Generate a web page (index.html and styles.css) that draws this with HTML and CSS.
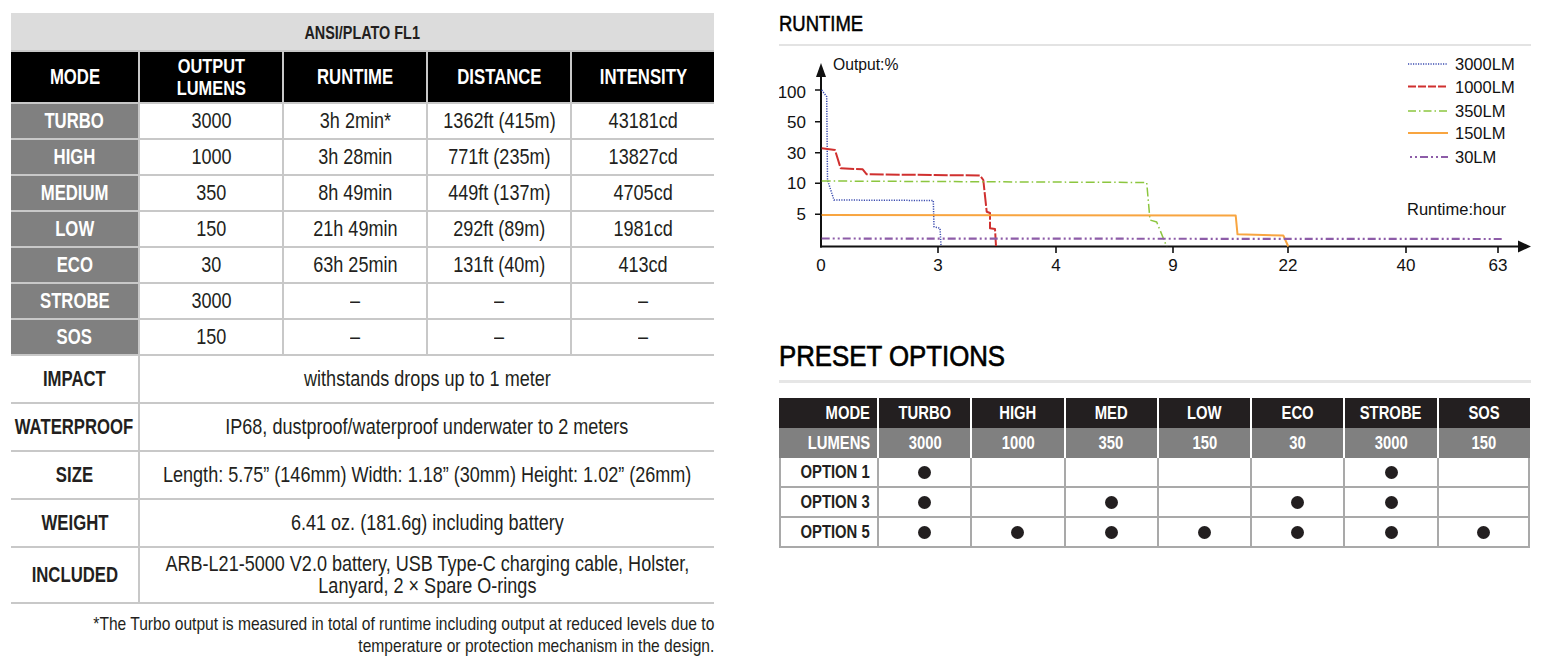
FILE: index.html
```html
<!DOCTYPE html>
<html lang="en">
<head>
<meta charset="utf-8">
<title>Specs</title>
<link rel="stylesheet" href="styles.css">
</head>
<body>
<div class="page">
  <section class="specs">
    <div class="spec-grid">
      <div class="cell ansi"><span class="t">ANSI/PLATO FL1</span></div>

      <div class="cell head"><span class="t">MODE</span></div>
      <div class="cell head two"><span class="t">OUTPUT<br>LUMENS</span></div>
      <div class="cell head"><span class="t">RUNTIME</span></div>
      <div class="cell head"><span class="t">DISTANCE</span></div>
      <div class="cell head"><span class="t">INTENSITY</span></div>

      <div class="cell mode"><span class="t">TURBO</span></div>
      <div class="cell val"><span class="t">3000</span></div>
      <div class="cell val"><span class="t">3h 2min*</span></div>
      <div class="cell val"><span class="t">1362ft (415m)</span></div>
      <div class="cell val"><span class="t">43181cd</span></div>

      <div class="cell mode"><span class="t">HIGH</span></div>
      <div class="cell val"><span class="t">1000</span></div>
      <div class="cell val"><span class="t">3h 28min</span></div>
      <div class="cell val"><span class="t">771ft (235m)</span></div>
      <div class="cell val"><span class="t">13827cd</span></div>

      <div class="cell mode"><span class="t">MEDIUM</span></div>
      <div class="cell val"><span class="t">350</span></div>
      <div class="cell val"><span class="t">8h 49min</span></div>
      <div class="cell val"><span class="t">449ft (137m)</span></div>
      <div class="cell val"><span class="t">4705cd</span></div>

      <div class="cell mode"><span class="t">LOW</span></div>
      <div class="cell val"><span class="t">150</span></div>
      <div class="cell val"><span class="t">21h 49min</span></div>
      <div class="cell val"><span class="t">292ft (89m)</span></div>
      <div class="cell val"><span class="t">1981cd</span></div>

      <div class="cell mode"><span class="t">ECO</span></div>
      <div class="cell val"><span class="t">30</span></div>
      <div class="cell val"><span class="t">63h 25min</span></div>
      <div class="cell val"><span class="t">131ft (40m)</span></div>
      <div class="cell val"><span class="t">413cd</span></div>

      <div class="cell mode"><span class="t">STROBE</span></div>
      <div class="cell val"><span class="t">3000</span></div>
      <div class="cell val"><span class="t">–</span></div>
      <div class="cell val"><span class="t">–</span></div>
      <div class="cell val"><span class="t">–</span></div>

      <div class="cell mode"><span class="t">SOS</span></div>
      <div class="cell val"><span class="t">150</span></div>
      <div class="cell val"><span class="t">–</span></div>
      <div class="cell val"><span class="t">–</span></div>
      <div class="cell val"><span class="t">–</span></div>

      <div class="cell label"><span class="t">IMPACT</span></div>
      <div class="cell val wide"><span class="t">withstands drops up to 1 meter</span></div>

      <div class="cell label"><span class="t">WATERPROOF</span></div>
      <div class="cell val wide"><span class="t">IP68, dustproof/waterproof underwater to 2 meters</span></div>

      <div class="cell label"><span class="t">SIZE</span></div>
      <div class="cell val wide"><span class="t">Length: 5.75” (146mm) Width: 1.18” (30mm) Height: 1.02” (26mm)</span></div>

      <div class="cell label"><span class="t">WEIGHT</span></div>
      <div class="cell val wide"><span class="t">6.41 oz. (181.6g) including battery</span></div>

      <div class="cell label"><span class="t">INCLUDED</span></div>
      <div class="cell val wide inc"><span class="t">ARB-L21-5000 V2.0 battery, USB Type-C charging cable, Holster,<br>Lanyard, 2 × Spare O-rings</span></div>
    </div>
    <p class="note"><span class="t">*The Turbo output is measured in total of runtime including output at reduced levels due to<br>temperature or protection mechanism in the design.</span></p>
  </section>

  <section class="side">
    <h2 class="title-sm"><span class="t">RUNTIME</span></h2>
    <div class="rule"></div>
    <svg class="chart" viewBox="779 46 752 234" width="752" height="234" xmlns="http://www.w3.org/2000/svg">
      <g fill="none" stroke="#111" stroke-width="2">
        <path d="M821 247.5 V74"/>
        <path d="M820 246.5 H1520"/>
      </g>
      <g fill="none" stroke="#111" stroke-width="1.6">
        <path d="M815 90 H821 M815 121.7 H821 M815 152.7 H821 M815 183.3 H821 M815 214.3 H821"/>
        <path d="M938 246 V253 M1056 246 V253 M1173 246 V253 M1288 246 V253 M1406 246 V253 M1498 246 V253"/>
      </g>
      <path d="M821 63 L816 77 L826 77 Z" fill="#111"/>
      <path d="M1531 246.5 L1518 240.5 L1518 252.5 Z" fill="#111"/>

      <g class="ctext" fill="#111">
        <text class="c-out" x="833" y="70">Output:%</text>
        <g class="c-y">
          <text x="806" y="97.5" text-anchor="end">100</text>
          <text x="806" y="128.2" text-anchor="end">50</text>
          <text x="806" y="158.7" text-anchor="end">30</text>
          <text x="806" y="189.3" text-anchor="end">10</text>
          <text x="806" y="220.2" text-anchor="end">5</text>
        </g>
        <g class="c-x">
          <text x="821" y="271" text-anchor="middle">0</text>
          <text x="938" y="271" text-anchor="middle">3</text>
          <text x="1056" y="271" text-anchor="middle">4</text>
          <text x="1173" y="271" text-anchor="middle">9</text>
          <text x="1288" y="271" text-anchor="middle">22</text>
          <text x="1406" y="271" text-anchor="middle">40</text>
          <text x="1498" y="271" text-anchor="middle">63</text>
        </g>
        <text x="1407" y="214.5">Runtime:hour</text>
        <text x="1455" y="70">3000LM</text>
        <text x="1455" y="92.5">1000LM</text>
        <text x="1455" y="117">350LM</text>
        <text x="1455" y="139">150LM</text>
        <text x="1455" y="163">30LM</text>
      </g>

      <g fill="none" stroke-linejoin="round">
        <path d="M821.7 90 L826.7 96.7 L827.5 180 L834 200 L933.3 200.5 L934 226.7 L940 228.3 L941 246" stroke="#3b4cb0" stroke-width="1.5" stroke-dasharray="1.2 1.3"/>
        <path d="M821.7 148.3 L835 150 L840.7 168.3 L862.7 169.3 L866.7 174.3 L980 175.5 L983.3 180 L986.7 211.7 L990 213 L990 228.3 L995 229 L996 246" stroke="#d0302f" stroke-width="2" stroke-dasharray="14 2"/>
        <path d="M821.7 181 L1146.7 182.5 L1150 220 L1156.7 222 L1166.7 246.5" stroke="#8cc63f" stroke-width="1.5" stroke-dasharray="9 3 1.5 3"/>
        <path d="M821.7 215 L1235.7 215.5 L1237.5 234.3 L1283.3 235.5 L1288.3 246.5" stroke="#f8a540" stroke-width="2"/>
        <path d="M821.7 238.5 L1503.3 239" stroke="#8d5ca8" stroke-width="2.2" stroke-dasharray="8 3 2 3 2 3"/>

        <path d="M1408 64 H1448" stroke="#3b4cb0" stroke-width="1.5" stroke-dasharray="1.2 1.3"/>
        <path d="M1408 86.5 H1448" stroke="#d0302f" stroke-width="1.8" stroke-dasharray="8 2"/>
        <path d="M1408 111 H1448" stroke="#8cc63f" stroke-width="1.5" stroke-dasharray="8 3 1.5 3"/>
        <path d="M1408 133 H1448" stroke="#f8a540" stroke-width="2"/>
        <path d="M1410 157 H1448" stroke="#8d5ca8" stroke-width="2" stroke-dasharray="2 3 2 3 8 3"/>
      </g>
    </svg>

    <h2 class="title-lg"><span class="t">PRESET OPTIONS</span></h2>
    <div class="rule thick"></div>

    <div class="preset-grid">
      <div class="pc ph first"><span class="t">MODE</span></div>
      <div class="pc ph"><span class="t">TURBO</span></div>
      <div class="pc ph"><span class="t">HIGH</span></div>
      <div class="pc ph"><span class="t">MED</span></div>
      <div class="pc ph"><span class="t">LOW</span></div>
      <div class="pc ph"><span class="t">ECO</span></div>
      <div class="pc ph"><span class="t">STROBE</span></div>
      <div class="pc ph"><span class="t">SOS</span></div>

      <div class="pc pl first"><span class="t">LUMENS</span></div>
      <div class="pc pl"><span class="t">3000</span></div>
      <div class="pc pl"><span class="t">1000</span></div>
      <div class="pc pl"><span class="t">350</span></div>
      <div class="pc pl"><span class="t">150</span></div>
      <div class="pc pl"><span class="t">30</span></div>
      <div class="pc pl"><span class="t">3000</span></div>
      <div class="pc pl"><span class="t">150</span></div>

      <div class="pc po first"><span class="t">OPTION 1</span></div>
      <div class="pc po"><span class="dot"></span></div>
      <div class="pc po"></div>
      <div class="pc po"></div>
      <div class="pc po"></div>
      <div class="pc po"></div>
      <div class="pc po"><span class="dot"></span></div>
      <div class="pc po last"></div>

      <div class="pc po first"><span class="t">OPTION 3</span></div>
      <div class="pc po"><span class="dot"></span></div>
      <div class="pc po"></div>
      <div class="pc po"><span class="dot"></span></div>
      <div class="pc po"></div>
      <div class="pc po"><span class="dot"></span></div>
      <div class="pc po"><span class="dot"></span></div>
      <div class="pc po last"></div>

      <div class="pc po first"><span class="t">OPTION 5</span></div>
      <div class="pc po"><span class="dot"></span></div>
      <div class="pc po"><span class="dot"></span></div>
      <div class="pc po"><span class="dot"></span></div>
      <div class="pc po"><span class="dot"></span></div>
      <div class="pc po"><span class="dot"></span></div>
      <div class="pc po"><span class="dot"></span></div>
      <div class="pc po last"><span class="dot"></span></div>
    </div>
  </section>
</div>
</body>
</html>
```

FILE: styles.css
```css
* { box-sizing: border-box; }

html, body {
  margin: 0;
  padding: 0;
  background: #fff;
}

body {
  font-family: "Liberation Sans", Arial, sans-serif;
  color: #231f20;
}

/* condensed text: the reference uses a condensed grotesque */
.t {
  display: inline-block;
  white-space: nowrap;
  transform: scaleX(0.82);
}

.page {
  display: flex;
  align-items: flex-start;
  padding: 13px 0 0 11px;
  gap: 65px;
}

/* ---------- left spec table ---------- */
.specs {
  width: 703px;
  flex: none;
}

.spec-grid {
  display: grid;
  grid-template-columns: 127px 142px 142px 142px 142px;
  grid-template-rows: 37px 50px repeat(7, 34px) repeat(4, 46px) 54px;
  gap: 2px;
  padding-bottom: 2px;
  background: #c8c8c8;
  width: 703px;
}

.cell {
  display: flex;
  align-items: center;
  justify-content: center;
  text-align: center;
  background: #fff;
  font-size: 22px;
  line-height: 22px;
}

.ansi {
  grid-column: 1 / -1;
  background: #dcdcdc;
  font-weight: bold;
  font-size: 18px;
  padding-top: 2px;
}

.ansi .t { transform: scaleX(0.8); }

.head {
  background: #000;
  color: #fff;
  font-weight: bold;
}

.head.two {
  font-size: 21px;
  line-height: 22px;
}

.mode {
  background: #808080;
  color: #fff;
  font-weight: bold;
}

.label {
  font-weight: bold;
}

.head .t,
.mode .t,
.label .t {
  transform: scaleX(0.76);
}

.head.two .t {
  transform: scaleX(0.78);
}

.val.wide {
  grid-column: 2 / -1;
}

.inc {
  line-height: 22px;
}

.note {
  margin: 9px 0 0;
  display: flex;
  justify-content: flex-end;
  font-size: 19px;
  line-height: 22px;
}

.note .t {
  text-align: right;
  transform-origin: right center;
}

/* ---------- right side ---------- */
.side {
  width: 752px;
  flex: none;
  display: flex;
  flex-direction: column;
}

.title-sm {
  margin: 0;
  font-size: 22px;
  line-height: 22px;
  font-weight: normal;
  -webkit-text-stroke: 0.5px #000;
  color: #000;
}

.title-sm .t {
  transform: scaleX(0.84);
  transform-origin: left center;
}

.rule {
  height: 2px;
  background: #e3e3e3;
  margin-top: 9px;
  width: 752px;
}

.rule.thick {
  height: 3px;
  background: #e6e6e6;
  margin-top: 9px;
}

.chart {
  display: block;
}

.ctext {
  font-family: "Liberation Sans", Arial, sans-serif;
  font-size: 16.5px;
}

.c-out { font-size: 15.7px; }
.c-y { font-size: 17px; }
.c-x { font-size: 17px; }

.title-lg {
  margin: 61px 0 0;
  font-size: 30px;
  line-height: 30px;
  font-weight: normal;
  -webkit-text-stroke: 0.7px #000;
  color: #000;
}

.title-lg .t {
  transform: scaleX(0.86);
  transform-origin: left center;
}

.preset-grid {
  margin-top: 15px;
  width: 751px;
  display: grid;
  grid-template-columns: 98px repeat(7, 1fr);
  grid-auto-rows: 30px;
}

.pc {
  display: flex;
  align-items: center;
  justify-content: center;
  font-size: 19px;
  font-weight: bold;
  border-left: 2px solid #fff;
}

.pc .t {
  transform: scaleX(0.78);
}

.pc.first {
  justify-content: flex-end;
  padding-right: 7px;
  border-left: none;
}

.pc.first .t {
  transform-origin: right center;
}

.ph {
  background: #231f20;
  color: #fff;
}

.pl {
  background: #808080;
  color: #fff;
}

.po {
  background: #fff;
  color: #231f20;
  border-left: 2px solid #a9a9a9;
  border-bottom: 2px solid #a9a9a9;
}

.po.first {
  border-left: 2px solid #a9a9a9;
}

.po.last {
  border-right: 2px solid #a9a9a9;
}

.dot {
  width: 13px;
  height: 13px;
  border-radius: 50%;
  background: #231f20;
}
```
